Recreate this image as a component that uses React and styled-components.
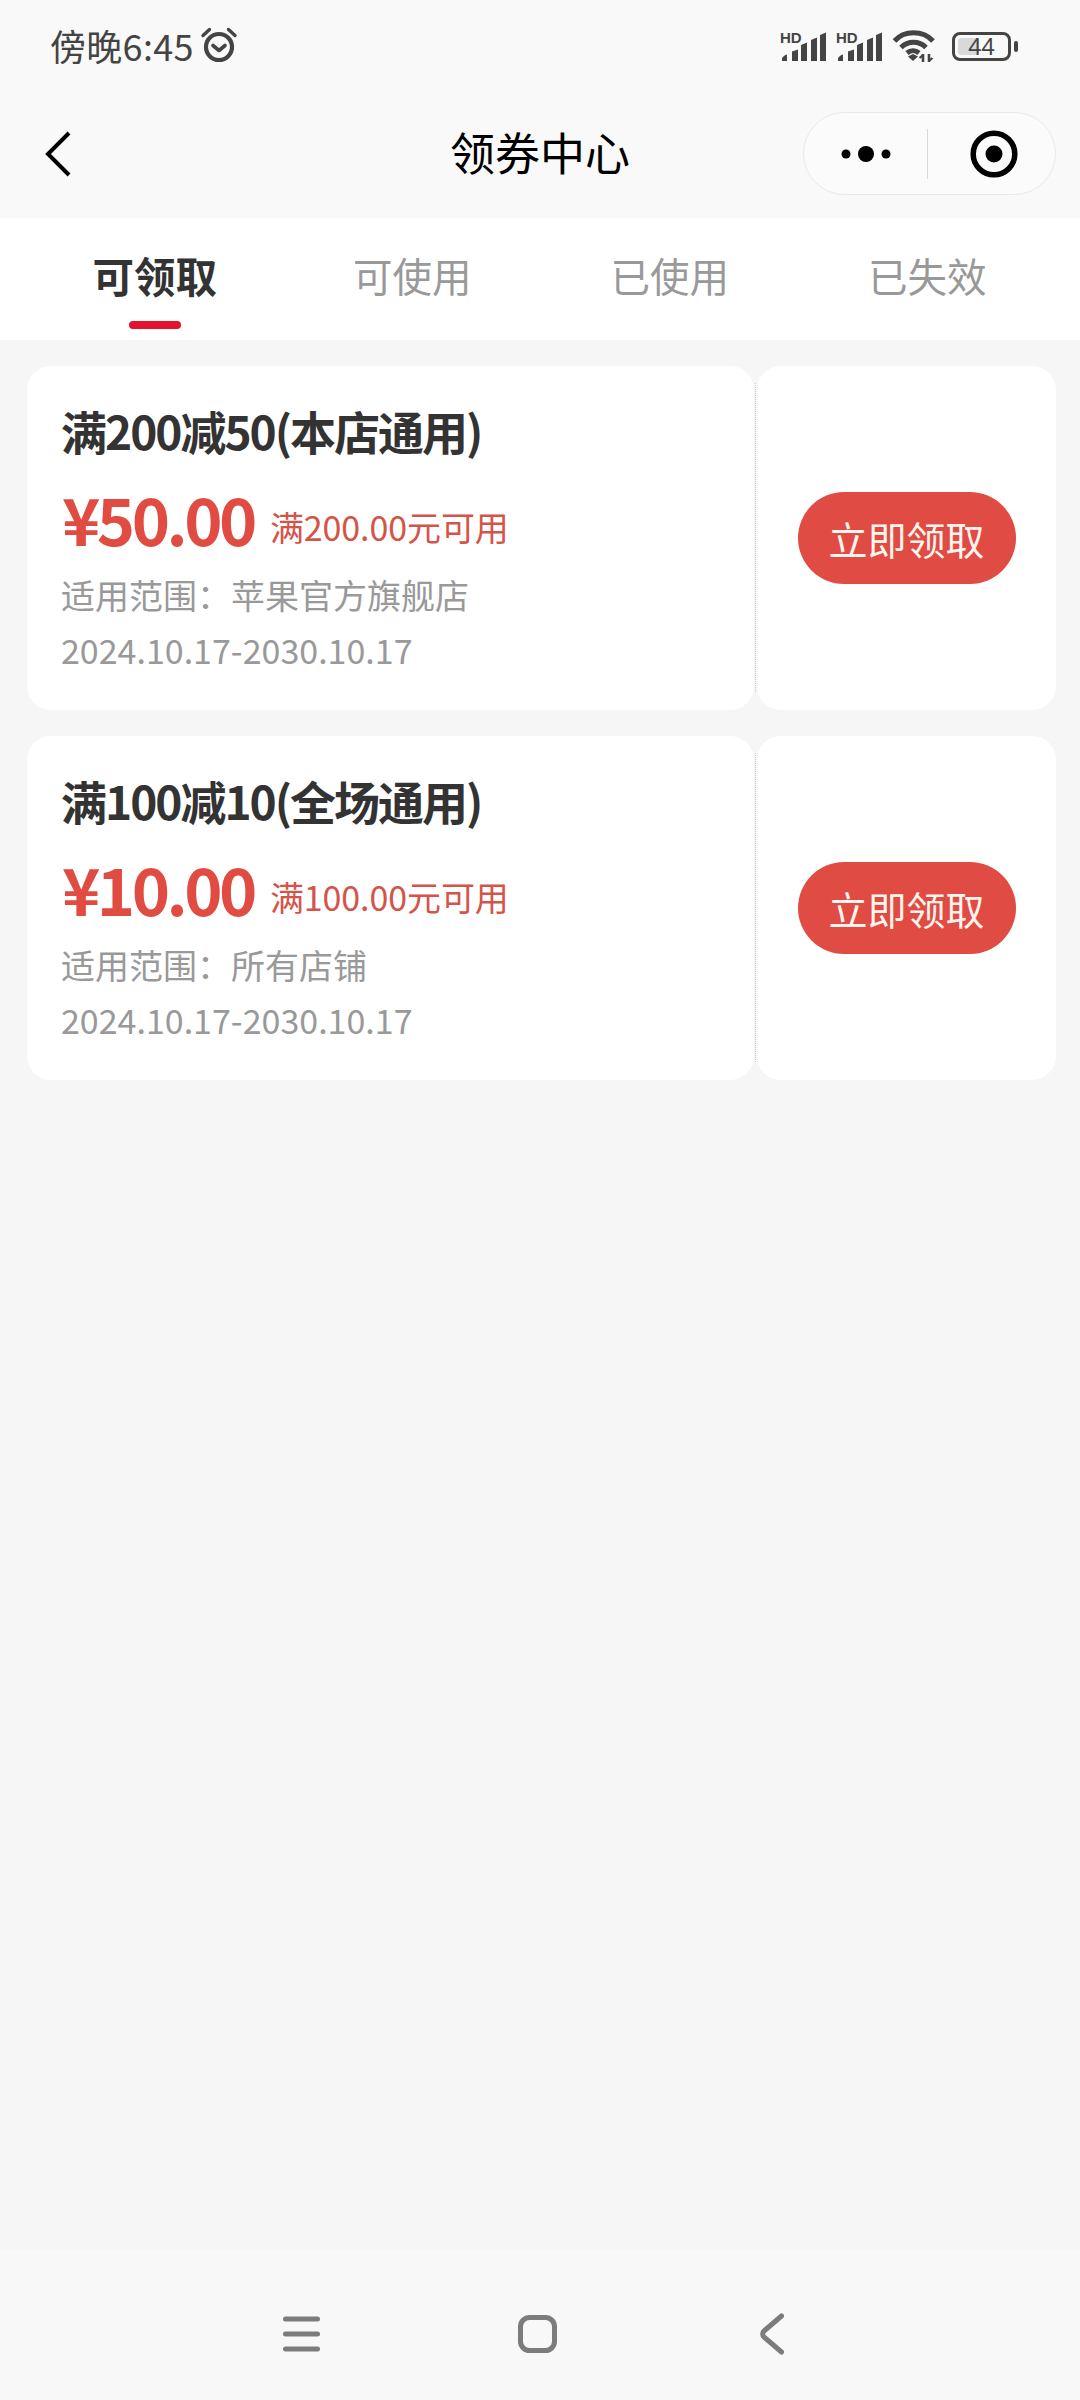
import React from 'react'
import styled, { createGlobalStyle } from 'styled-components'

const GlobalStyle = createGlobalStyle`
  html, body {
    margin: 0;
    padding: 0;
    background: #f6f6f6;
    font-family: "Noto Sans CJK SC", "Noto Sans", sans-serif;
  }
  * { box-sizing: border-box; }
`

const tabs = ['可领取', '可使用', '已使用', '已失效']

const coupons = [
  {
    title: '满200减50(本店通用)',
    amount: '¥50.00',
    limit: '满200.00元可用',
    scope: '适用范围：苹果官方旗舰店',
    date: '2024.10.17-2030.10.17',
  },
  {
    title: '满100减10(全场通用)',
    amount: '¥10.00',
    limit: '满100.00元可用',
    scope: '适用范围：所有店铺',
    date: '2024.10.17-2030.10.17',
  },
]

const AlarmIcon = () => (
  <svg width="38" height="38" viewBox="0 0 38 38" fill="none" stroke="#444" strokeLinecap="round">
    <circle cx="19" cy="21" r="13" strokeWidth="4.200" />
    <path d="M13 19.500l6 5 6-5" strokeWidth="3.600" strokeLinejoin="round" />
    <path d="M3 9.500L9.500 3.500M35 9.500L28.500 3.500" strokeWidth="3.400" />
  </svg>
)

const SignalIcon = () => (
  <svg width="48" height="32" viewBox="0 0 48 32">
    <text x="0" y="13" fontFamily="Liberation Sans, sans-serif" fontWeight="700" fontSize="15" fill="#444">HD</text>
    <g fill="#444">
      <path d="M2 31v-2c0-2 2-3.500 5-4.500V31z" />
      <path d="M12 31V21.500l6-2V31z" />
      <path d="M21 31V15l6-2.500V31z" />
      <path d="M31 31V10l6-2.500V31z" />
      <path d="M40 31V5l6-2.500V31z" />
    </g>
  </svg>
)

const WifiIcon = () => (
  <svg width="44" height="34" viewBox="0 0 44 34" fill="none" stroke="#444" strokeWidth="5">
    <path d="M2.500 12C12 1 31 1 41 12" />
    <path d="M9 18.500C16 11.500 27 11.500 34 18.500" />
    <path d="M15 24C18.500 21 23.500 21 27 24" />
    <path d="M16 27.500l5-2.500 5 2.500-5 4.500z" fill="#444" stroke="none" />
    <path d="M31 25v8M37 25v8" strokeWidth="2.600" />
    <path d="M27.500 29l3-2.500M40.500 29l-3 2.500" strokeWidth="2.200" />
  </svg>
)

const MoreIcon = () => (
  <svg width="50" height="20" viewBox="0 0 50 20" fill="#000">
    <circle cx="5" cy="10" r="4.500" />
    <circle cx="25" cy="10" r="8" />
    <circle cx="45" cy="10" r="4.500" />
  </svg>
)

const TargetIcon = () => (
  <svg width="48" height="48" viewBox="0 0 48 48" fill="none">
    <circle cx="24" cy="24" r="20.800" stroke="#000" strokeWidth="5.500" />
    <circle cx="24" cy="24" r="8.500" fill="#000" />
  </svg>
)

const BackIcon = () => (
  <svg width="26" height="46" viewBox="0 0 26 46" fill="none" stroke="#000" strokeWidth="4">
    <path d="M24 2L3 23l21 21" />
  </svg>
)

const MenuKey = () => (
  <svg width="37" height="36" viewBox="0 0 37 36" stroke="#7c7c7c" strokeWidth="5" strokeLinecap="round">
    <path d="M2.500 3h32M2.500 18h32M2.500 33h32" />
  </svg>
)

const HomeKey = () => (
  <svg width="39" height="38" viewBox="0 0 39 38" fill="none" stroke="#7c7c7c" strokeWidth="5">
    <rect x="2.500" y="2.500" width="34" height="33" rx="9" />
  </svg>
)

const BackKey = () => (
  <svg width="24" height="42" viewBox="0 0 24 42" fill="none" stroke="#7c7c7c" strokeWidth="5" strokeLinecap="round" strokeLinejoin="round">
    <path d="M21.500 3L4 18c-1.800 1.500-1.800 4.500 0 6L21.500 39" />
  </svg>
)

const App = () => {
  return (
    <Page>
      <GlobalStyle />
      <Header>
        <StatusBar>
          <StatusLeft>
            <Clock>傍晚6:45</Clock>
            <AlarmIcon />
          </StatusLeft>
          <StatusRight>
            <SignalIcon />
            <SignalIcon />
            <WifiIcon />
            <Battery>
              <BatteryBody>
                <BatteryLevel />
                <BatteryText>44</BatteryText>
              </BatteryBody>
              <BatteryTip />
            </Battery>
          </StatusRight>
        </StatusBar>
        <NavBar>
          <BackIcon />
          <NavTitle>领券中心</NavTitle>
          <Capsule>
            <CapsuleSide>
              <MoreIcon />
            </CapsuleSide>
            <CapsuleLine />
            <CapsuleSide>
              <TargetIcon />
            </CapsuleSide>
          </Capsule>
        </NavBar>
      </Header>

      <TabBar>
        {tabs.map((tab, i) => (
          <Tab key={tab} $active={i === 0}>
            {tab}
          </Tab>
        ))}
      </TabBar>

      <CouponList>
        {coupons.map((c) => (
          <Coupon key={c.title}>
            <CouponInfo>
              <CouponTitle>{c.title}</CouponTitle>
              <PriceRow>
                <Amount>{c.amount}</Amount>
                <Limit>{c.limit}</Limit>
              </PriceRow>
              <Meta>{c.scope}</Meta>
              <Meta>{c.date}</Meta>
            </CouponInfo>
            <CouponAction>
              <ClaimButton>立即领取</ClaimButton>
            </CouponAction>
          </Coupon>
        ))}
      </CouponList>

      <SystemNav>
        <MenuKey />
        <HomeKey />
        <BackKey />
      </SystemNav>
    </Page>
  )
}

const Page = styled.div`
  width: 1080px;
  height: 2400px;
  display: flex;
  flex-direction: column;
  background: #f6f6f6;
`

const Header = styled.header`
  height: 218px;
  background: #f9f9f9;
  flex-shrink: 0;
`

const StatusBar = styled.div`
  height: 94px;
  padding: 23px 62px 0 50px;
  display: flex;
  justify-content: space-between;
  align-items: flex-start;
`

const StatusLeft = styled.div`
  display: flex;
  align-items: center;
  gap: 6px;
  height: 44px;
  color: #444;
`

const Clock = styled.span`
  font-size: 36px;
  line-height: 44px;
  letter-spacing: 0.3px;
  color: #444;
`

const StatusRight = styled.div`
  display: flex;
  align-items: center;
  gap: 8px;
  height: 44px;
  margin-top: 1px;
`

const Battery = styled.div`
  display: flex;
  align-items: center;
  gap: 3px;
  margin-left: 8px;
`

const BatteryBody = styled.div`
  position: relative;
  width: 59px;
  height: 29px;
  border: 3px solid #444;
  border-radius: 8px;
  display: flex;
  align-items: center;
  justify-content: center;
`

const BatteryLevel = styled.div`
  position: absolute;
  left: 3px;
  top: 3px;
  bottom: 3px;
  width: 40%;
  background: #d9d9d9;
  border-radius: 3px;
`

const BatteryText = styled.span`
  position: relative;
  font-family: "Noto Sans", sans-serif;
  font-size: 23px;
  line-height: 1;
  color: #444;
`

const BatteryTip = styled.div`
  width: 4px;
  height: 11px;
  background: #444;
  border-radius: 2px;
`

const NavBar = styled.div`
  position: relative;
  height: 124px;
  padding: 0 24px 5px 45px;
  display: flex;
  align-items: center;
  justify-content: space-between;
`

const NavTitle = styled.h1`
  position: absolute;
  left: 0;
  right: 0;
  top: 23px;
  margin: 0;
  text-align: center;
  font-size: 45px;
  line-height: 70px;
  font-weight: 400;
  color: #000;
`

const Capsule = styled.div`
  width: 253px;
  height: 83px;
  border: 1px solid #e8e8e8;
  border-radius: 42px;
  background: #fbfbfb;
  display: flex;
  align-items: center;
`

const CapsuleSide = styled.div`
  flex: 1;
  display: flex;
  align-items: center;
  justify-content: center;

  &:last-child {
    padding-left: 4px;
  }
`

const CapsuleLine = styled.div`
  width: 1px;
  height: 50px;
  background: #d8d8d8;
`

const TabBar = styled.nav`
  height: 122px;
  padding: 0 24px 0 26px;
  background: #fff;
  display: grid;
  grid-template-columns: repeat(4, 1fr);
  flex-shrink: 0;
`

const Tab = styled.div`
  position: relative;
  padding-top: 24px;
  text-align: center;
  font-size: ${({ $active }) => ($active ? '41.500px' : '39.500px')};
  line-height: 66px;
  font-weight: ${({ $active }) => ($active ? 700 : 400)};
  color: ${({ $active }) => ($active ? '#333' : '#999')};

  &::after {
    content: '';
    display: ${({ $active }) => ($active ? 'block' : 'none')};
    position: absolute;
    left: 50%;
    bottom: 11px;
    width: 52px;
    height: 8px;
    margin-left: -26px;
    border-radius: 4px;
    background: #e5122d;
  }
`

const CouponList = styled.div`
  padding: 26px 24px 0 27px;
  display: flex;
  flex-direction: column;
  gap: 26px;
  flex: 1;
`

const Coupon = styled.article`
  height: 344px;
  display: grid;
  grid-template-columns: 727px 1fr;
  column-gap: 3px;
`

const CouponInfo = styled.div`
  position: relative;
  background: #fff;
  border-radius: 24px;
  padding: 29px 0 0 35px;

  &::after {
    content: '';
    position: absolute;
    right: -2px;
    top: 17px;
    bottom: 18px;
    border-right: 1px dotted #ccc;
  }
`

const CouponTitle = styled.h2`
  margin: 0 0 0 -1px;
  font-size: 46px;
  line-height: 70px;
  font-weight: 700;
  letter-spacing: -2px;
  color: #333;
`

const PriceRow = styled.div`
  display: flex;
  align-items: flex-start;
  gap: 16px;
  height: 102px;
  padding-top: 11px;
`

const Amount = styled.span`
  font-size: 65px;
  line-height: 84px;
  font-weight: 700;
  letter-spacing: -3.500px;
  color: #e04c42;
`

const Limit = styled.span`
  padding-top: 9px;
  font-size: 34px;
  line-height: 84px;
  letter-spacing: -0.100px;
  color: #d4544a;
`

const Meta = styled.div`
  margin-left: -1px;
  font-size: 34px;
  line-height: 55px;
  color: #999;
`

const CouponAction = styled.div`
  background: #fff;
  border-radius: 24px;
  padding-top: 126px;
  display: flex;
  justify-content: center;
  align-items: flex-start;
`

const ClaimButton = styled.button`
  width: 218px;
  height: 92px;
  padding: 0;
  border: 0;
  border-radius: 46px;
  background: #e04b43;
  font-family: inherit;
  font-size: 39px;
  color: #fff4ee;
`

const SystemNav = styled.footer`
  height: 150px;
  padding: 18px 296px 0 283px;
  background: #f8f8f8;
  display: flex;
  align-items: center;
  justify-content: space-between;
  flex-shrink: 0;

  svg:nth-child(2) {
    margin-left: -5px;
  }
`

export default App
